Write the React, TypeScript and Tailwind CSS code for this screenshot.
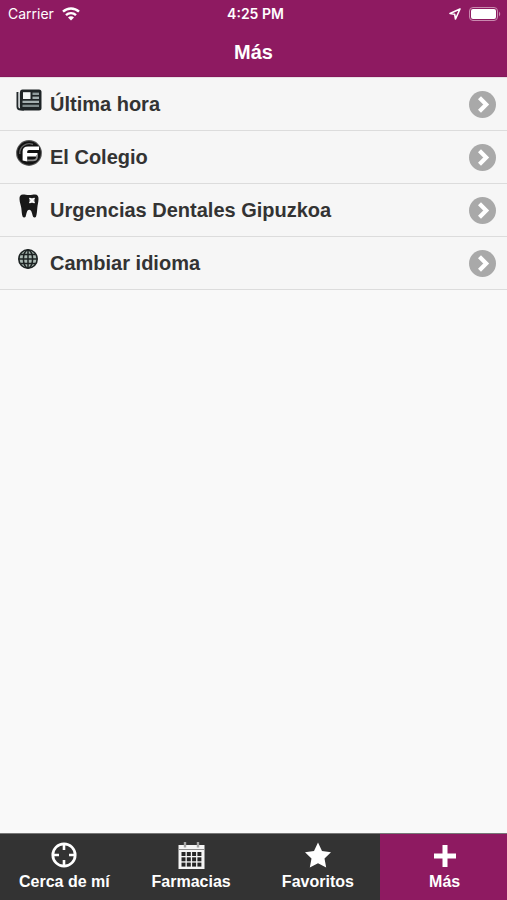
import type { ReactNode } from "react";

function NewspaperIcon() {
  return (
    <svg width="26" height="22" viewBox="0 0 26 22" aria-hidden="true">
      <path d="M1.5 3V17.5Q1.5 20.5 4.5 20.5H8" fill="none" stroke="#22282a" strokeWidth="2" />
      <path d="M3.2 3.5V18.5" stroke="#c3cacb" strokeWidth="1.4" />
      <rect x="4" y="0.5" width="21.5" height="21" rx="2.5" fill="#1e2426" />
      <rect x="7" y="3.2" width="7.5" height="6.8" fill="#f2f5f5" />
      <rect x="16.5" y="3.6" width="6.5" height="2.4" fill="#8f9b9c" />
      <rect x="16.5" y="7.6" width="6.5" height="2.4" fill="#a4afb0" />
      <rect x="6.5" y="11.7" width="16.5" height="2.3" fill="#a4afb0" />
      <rect x="6.5" y="15.7" width="16.5" height="2.3" fill="#7f8b8c" />
    </svg>
  );
}

function ColegioIcon() {
  return (
    <svg width="26" height="26" viewBox="0 0 26 26" aria-hidden="true">
      <circle cx="13" cy="13" r="12.9" fill="#555" />
      <circle cx="13" cy="13" r="11.8" fill="#111" />
      <path d="M3.8 14A9.4 9.4 0 0 1 17 4.5" fill="none" stroke="#666" strokeWidth="1.4" />
      <path
        d="M23 6.6H12Q6.6 6.6 6.6 11.5V20.5L11.2 21.5V16.6H21.5V13H11.2V11.6Q11.2 10 13 10H23Z"
        fill="#fff"
      />
      <path d="M21 15V17.5Q20.5 20.4 17 20.4H11" fill="none" stroke="#8d8d8d" strokeWidth="1.6" />
    </svg>
  );
}

function ToothIcon() {
  return (
    <svg className="mr-px" width="20" height="24" viewBox="0 0 20 24" aria-hidden="true">
      <path
        d="M4 0.5C6 0.5 7.5 1 10 1S14 0.5 16 0.5C18.5 0.5 19.6 2.2 19.5 5C19.4 8.8 18.6 10.5 18.3 14C18 17 17.9 20 17 22.8C16.6 23.8 14.6 23.8 14.1 22.8C13.2 20.5 12.8 15.8 10.2 15.8C7.6 15.8 7.5 20.5 6.6 22.8C6.1 23.8 4.2 23.8 3.7 22.8C2.7 20 2.7 17 2.3 14C1.8 10.5 0.6 8.8 0.5 5C0.4 2.2 1.5 0.5 4 0.5Z"
        fill="#181818"
      />
      <rect x="10.5" y="4" width="5" height="5" fill="#c8c8c8" />
      <path d="M10.5 4L15.5 9M15.5 4L10.5 9" stroke="#fff" strokeWidth="1.3" />
    </svg>
  );
}

function GlobeIcon() {
  return (
    <svg className="mr-0.5" width="20" height="20" viewBox="0 0 20 20" aria-hidden="true">
      <circle cx="10" cy="10" r="9.2" fill="#a9b8b2" stroke="#1d2323" strokeWidth="1.6" />
      <g fill="none" stroke="#1d2323" strokeWidth="1.5">
        <ellipse cx="10" cy="10" rx="4.6" ry="9" />
        <path d="M10 1V19M1 10H19M2.8 5.5H17.2M2.8 14.5H17.2" />
      </g>
    </svg>
  );
}

function ChevronBadge() {
  return (
    <svg className="shrink-0" width="27" height="27" viewBox="0 0 27 27" aria-hidden="true">
      <circle cx="13.5" cy="13.5" r="13.5" fill="#a9a9a9" />
      <path d="M10.5 6.8L17.2 13.5L10.5 20.2" fill="none" stroke="#fff" strokeWidth="4.2" />
    </svg>
  );
}

function TargetIcon() {
  return (
    <svg className="mb-0.5" width="26" height="26" viewBox="0 0 26 26" aria-hidden="true">
      <g fill="none" stroke="#fff">
        <circle cx="13" cy="13" r="11.2" strokeWidth="2.7" />
        <path d="M13 2V8M13 18V24M2 13H8M18 13H24" strokeWidth="2.6" />
      </g>
    </svg>
  );
}

function CalendarIcon() {
  const columns = [3.5, 8.8, 14.1, 19.4];
  const rows = [10, 15.3, 20.6];
  return (
    <svg width="27" height="28" viewBox="0 0 27 28" aria-hidden="true">
      <rect x="0.5" y="3" width="26" height="24" fill="#f5f5f5" />
      <path d="M0.5 7.5H26.5" stroke="#8b8b8b" strokeWidth="1" />
      <path d="M7 0V5.5M20 0V5.5" stroke="#a5a5a5" strokeWidth="2.4" />
      {rows.map((y) => columns.map((x) => <rect key={`${x}-${y}`} x={x} y={y} width="4" height="4" fill="#262626" />))}
    </svg>
  );
}

function StarIcon() {
  return (
    <svg className="mb-0.5" width="26" height="26" viewBox="0 0 26 26" aria-hidden="true">
      <path d="M13 0.5L17 9L26 10.2L19.5 16.5L21.2 25.5L13 21.2L4.8 25.5L6.5 16.5L0 10.2L9 9Z" fill="#fff" />
    </svg>
  );
}

function PlusIcon() {
  return (
    <svg width="24" height="24" viewBox="0 0 24 24" aria-hidden="true">
      <path d="M12 1V23M1 12H23" stroke="#fff" strokeWidth="5" />
    </svg>
  );
}

function StatusBar() {
  return (
    <div className="grid h-7 grid-cols-3 items-center pr-1 pl-2 font-['Inter','Liberation_Sans',sans-serif] text-[14px] leading-5">
      <div className="flex items-center gap-2">
        <span>Carrier</span>
        <svg width="18" height="14" viewBox="0 0 18 14" aria-label="Wi-Fi" role="img">
          <g fill="none" stroke="#fff" strokeWidth="2.4">
            <path d="M1 4.7A11.5 11.5 0 0 1 17 4.7" />
            <path d="M4 8.1A7.2 7.2 0 0 1 14 8.1" />
          </g>
          <path d="M9 13.5L6 10.4A4.2 4.2 0 0 1 12 10.4Z" fill="#fff" />
        </svg>
      </div>
      <time className="text-center font-semibold">4:25 PM</time>
      <div className="flex items-center justify-end gap-2">
        <svg width="12" height="12" viewBox="0 0 12 12" aria-label="Ubicación" role="img">
          <path d="M11 1L1 5.5L5.7 6.3L6.5 11Z" fill="none" stroke="#fff" strokeWidth="1.6" strokeLinejoin="round" />
        </svg>
        <svg width="34" height="14" viewBox="0 0 34 14" aria-label="Batería" role="img">
          <rect x="0.5" y="0.5" width="28" height="13" rx="3.5" fill="none" stroke="#c98aaf" />
          <rect x="2" y="2" width="25" height="10" rx="2" fill="#fff" />
          <path d="M30 4.5Q32.5 7 30 9.5Z" fill="#c98aaf" />
        </svg>
      </div>
    </div>
  );
}

const items: { label: string; icon: ReactNode }[] = [
  { label: "Última hora", icon: <NewspaperIcon /> },
  { label: "El Colegio", icon: <ColegioIcon /> },
  { label: "Urgencias Dentales Gipuzkoa", icon: <ToothIcon /> },
  { label: "Cambiar idioma", icon: <GlobeIcon /> },
];

const tabs: { label: string; icon: ReactNode; active?: boolean }[] = [
  { label: "Cerca de mí", icon: <TargetIcon /> },
  { label: "Farmacias", icon: <CalendarIcon /> },
  { label: "Favoritos", icon: <StarIcon /> },
  { label: "Más", icon: <PlusIcon />, active: true },
];

export default function App() {
  return (
    <div className="flex min-h-screen flex-col bg-[#f9f9f9] font-['Liberation_Sans',Arial,sans-serif] font-bold text-[#333]">
      <header className="border-b border-[#84185a] bg-[#8e1a61] font-normal text-white">
        <StatusBar />
        <h1 className="h-12 text-center text-[20px] leading-12 font-bold">Más</h1>
      </header>

      <main className="flex-1">
        <ul className="border-t border-[#e9dfe5]">
          {items.map((item) => (
            <li key={item.label}>
              <a href="#" className="flex h-[53px] items-center gap-2 border-b border-[#dcdcdc] bg-[#f6f6f6] pr-[11px] pl-4">
                <span className="flex h-11 w-[26px] shrink-0 items-center justify-center self-start">{item.icon}</span>
                <span className="min-w-0 flex-1 truncate text-[20px] leading-6">{item.label}</span>
                <ChevronBadge />
              </a>
            </li>
          ))}
        </ul>
      </main>

      <nav className="sticky bottom-0 grid grid-cols-4 border-t border-[#777] bg-[#333] text-white">
        {tabs.map((tab) => (
          <a
            key={tab.label}
            href="#"
            aria-current={tab.active ? "page" : undefined}
            className="flex flex-col items-center pt-2 pb-2 pl-0.5 aria-[current=page]:bg-[#8e1a61]"
          >
            <span className="flex h-7 items-center">{tab.icon}</span>
            <span className="mt-0.5 text-[16px] leading-5">{tab.label}</span>
          </a>
        ))}
      </nav>
    </div>
  );
}
